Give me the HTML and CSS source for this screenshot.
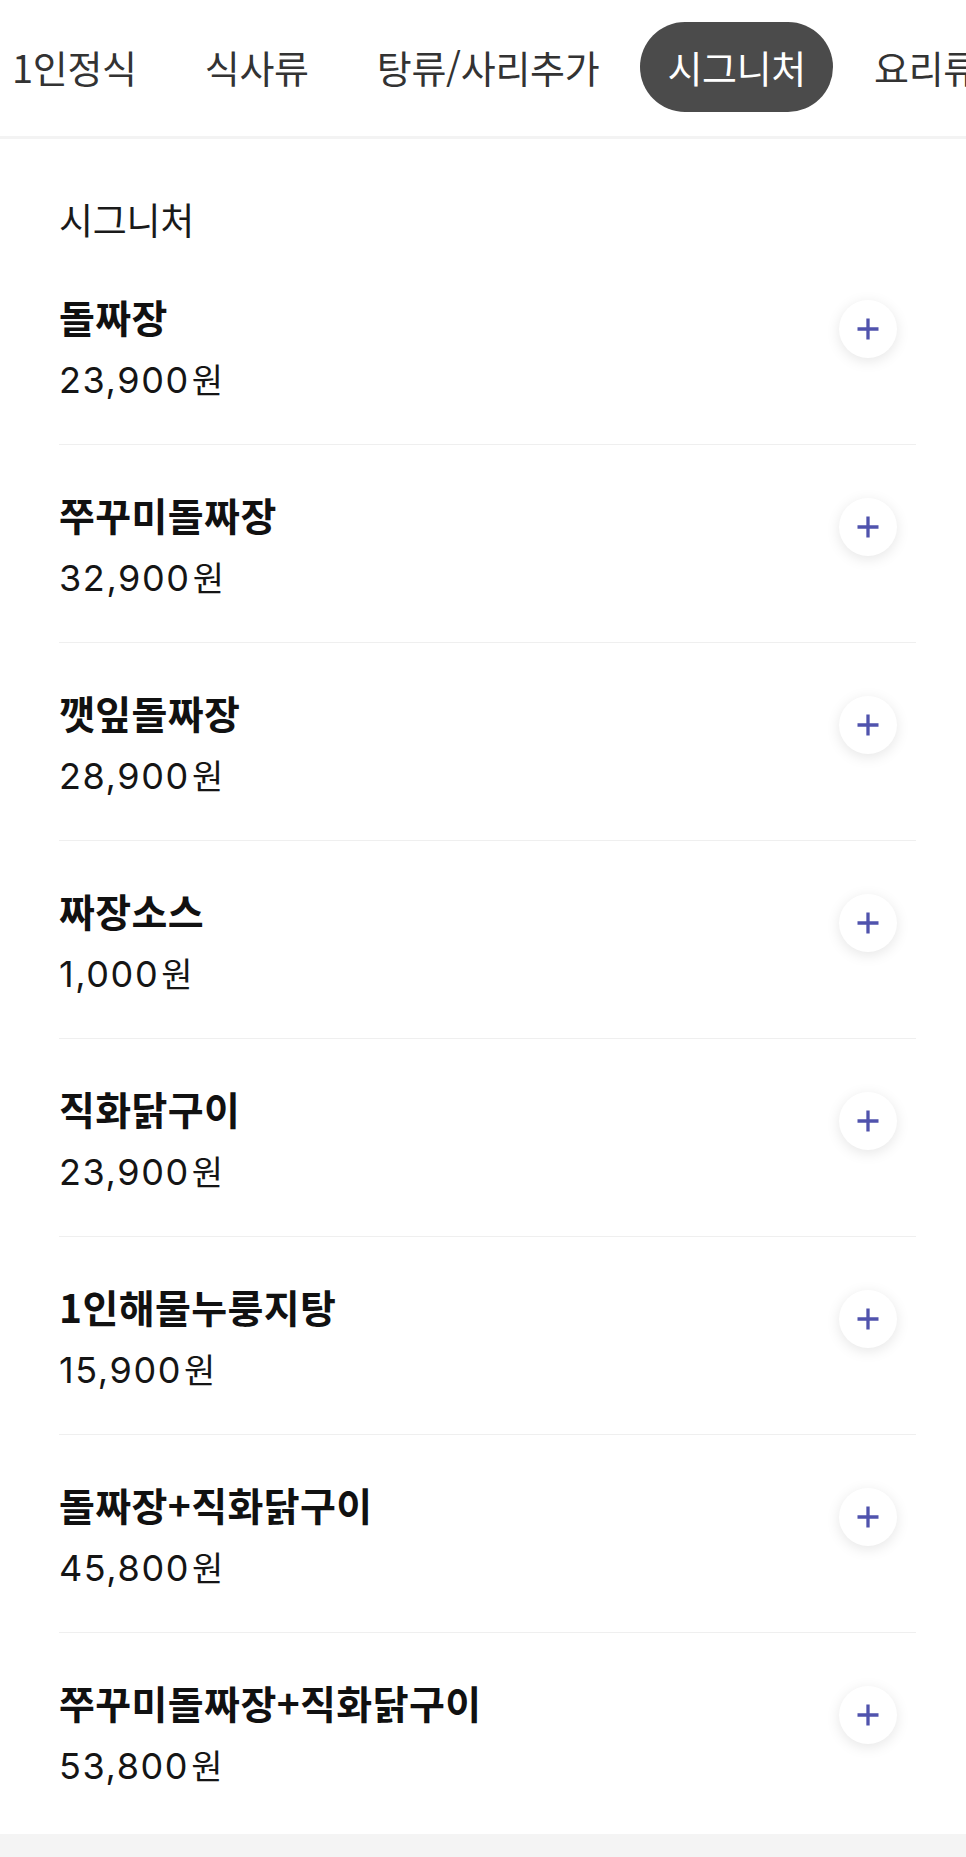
FILE: index.html
```html
<!DOCTYPE html>
<html lang="ko">
<head>
<meta charset="utf-8">
<title>시그니처</title>
<link rel="stylesheet" href="styles.css">
</head>
<body>
<nav class="tabs">
  <div class="tab-strip">
    <span class="tab">1인정식</span>
    <span class="tab">식사류</span>
    <span class="tab">탕류/사리추가</span>
    <span class="tab active">시그니처</span>
    <span class="tab">요리류</span>
  </div>
</nav>
<main class="section">
  <h2 class="section-title">시그니처</h2>
  <ul class="menu">
    <li class="item"><div class="info"><div class="name">돌짜장</div><div class="price">23,900<span class="won">원</span></div></div><button class="add" aria-label="추가"><svg viewBox="0 0 24 24" width="24" height="24"><path d="M12 1.5v21M1.5 12h21"/></svg></button></li>
    <li class="item"><div class="info"><div class="name">쭈꾸미돌짜장</div><div class="price">32,900<span class="won">원</span></div></div><button class="add" aria-label="추가"><svg viewBox="0 0 24 24" width="24" height="24"><path d="M12 1.5v21M1.5 12h21"/></svg></button></li>
    <li class="item"><div class="info"><div class="name">깻잎돌짜장</div><div class="price">28,900<span class="won">원</span></div></div><button class="add" aria-label="추가"><svg viewBox="0 0 24 24" width="24" height="24"><path d="M12 1.5v21M1.5 12h21"/></svg></button></li>
    <li class="item"><div class="info"><div class="name">짜장소스</div><div class="price">1,000<span class="won">원</span></div></div><button class="add" aria-label="추가"><svg viewBox="0 0 24 24" width="24" height="24"><path d="M12 1.5v21M1.5 12h21"/></svg></button></li>
    <li class="item"><div class="info"><div class="name">직화닭구이</div><div class="price">23,900<span class="won">원</span></div></div><button class="add" aria-label="추가"><svg viewBox="0 0 24 24" width="24" height="24"><path d="M12 1.5v21M1.5 12h21"/></svg></button></li>
    <li class="item"><div class="info"><div class="name">1인해물누룽지탕</div><div class="price">15,900<span class="won">원</span></div></div><button class="add" aria-label="추가"><svg viewBox="0 0 24 24" width="24" height="24"><path d="M12 1.5v21M1.5 12h21"/></svg></button></li>
    <li class="item"><div class="info"><div class="name">돌짜장+직화닭구이</div><div class="price">45,800<span class="won">원</span></div></div><button class="add" aria-label="추가"><svg viewBox="0 0 24 24" width="24" height="24"><path d="M12 1.5v21M1.5 12h21"/></svg></button></li>
    <li class="item last"><div class="info"><div class="name">쭈꾸미돌짜장+직화닭구이</div><div class="price">53,800<span class="won">원</span></div></div><button class="add" aria-label="추가"><svg viewBox="0 0 24 24" width="24" height="24"><path d="M12 1.5v21M1.5 12h21"/></svg></button></li>
  </ul>
</main>
<footer class="footer-gap"></footer>
</body>
</html>
```

FILE: styles.css
```css
html, body {
  margin: 0;
  padding: 0;
  background: #ffffff;
}
body {
  width: 966px;
  overflow: hidden;
  font-family: "Noto Sans CJK KR", "Noto Sans", sans-serif;
  color: #111111;
}
.tabs {
  box-sizing: border-box;
  height: 139px;
  padding-top: 22px;
  border-bottom: 3px solid #f3f3f3;
  overflow: hidden;
}
.tab-strip {
  display: flex;
  gap: 14px;
  margin-left: -15px;
  white-space: nowrap;
}
.tab {
  flex: none;
  height: 90px;
  line-height: 90px;
  padding: 0 27px;
  border-radius: 45px;
  font-size: 38px;
  color: #333333;
  letter-spacing: -0.3px;
}
.tab.active {
  background: #4b4b4b;
  color: #ffffff;
}
.section {
  padding: 0 50px 0 59px;
}
.section-title {
  margin: 0;
  padding-top: 55px;
  height: 53px;
  line-height: 50px;
  font-size: 37px;
  font-weight: 400;
  color: #1a1a1a;
  letter-spacing: -0.3px;
}
.menu {
  list-style: none;
  margin: 0;
  padding: 0;
}
.item {
  box-sizing: border-box;
  height: 198px;
  padding-top: 45px;
  display: flex;
  justify-content: space-between;
  align-items: flex-start;
  border-bottom: 1px solid #efefef;
}
.item.last {
  border-bottom: none;
  height: 201px;
}
.name {
  font-size: 39px;
  line-height: 48px;
  font-weight: 700;
  letter-spacing: 0.4px;
  color: #111111;
}
.price {
  margin-top: 15px;
  font-family: Inter, "Noto Sans CJK KR", sans-serif;
  font-size: 36px;
  line-height: 48px;
  font-weight: 400;
  letter-spacing: 1.6px;
  color: #151515;
}
.won {
  font-family: "Noto Sans CJK KR", sans-serif;
  font-size: 34px;
  letter-spacing: 0;
  margin-left: 2px;
}
.add {
  flex: none;
  width: 58px;
  height: 58px;
  margin-top: 8px;
  margin-right: 19px;
  padding: 0;
  border: none;
  border-radius: 50%;
  background: #ffffff;
  box-shadow: 0 3px 14px rgba(0, 0, 0, 0.10);
  display: flex;
  align-items: center;
  justify-content: center;
}
.add svg {
  display: block;
}
.add path {
  fill: none;
  stroke: #5053ad;
  stroke-width: 3.3;
}
.footer-gap {
  height: 40px;
  background: #f4f4f4;
}
```
